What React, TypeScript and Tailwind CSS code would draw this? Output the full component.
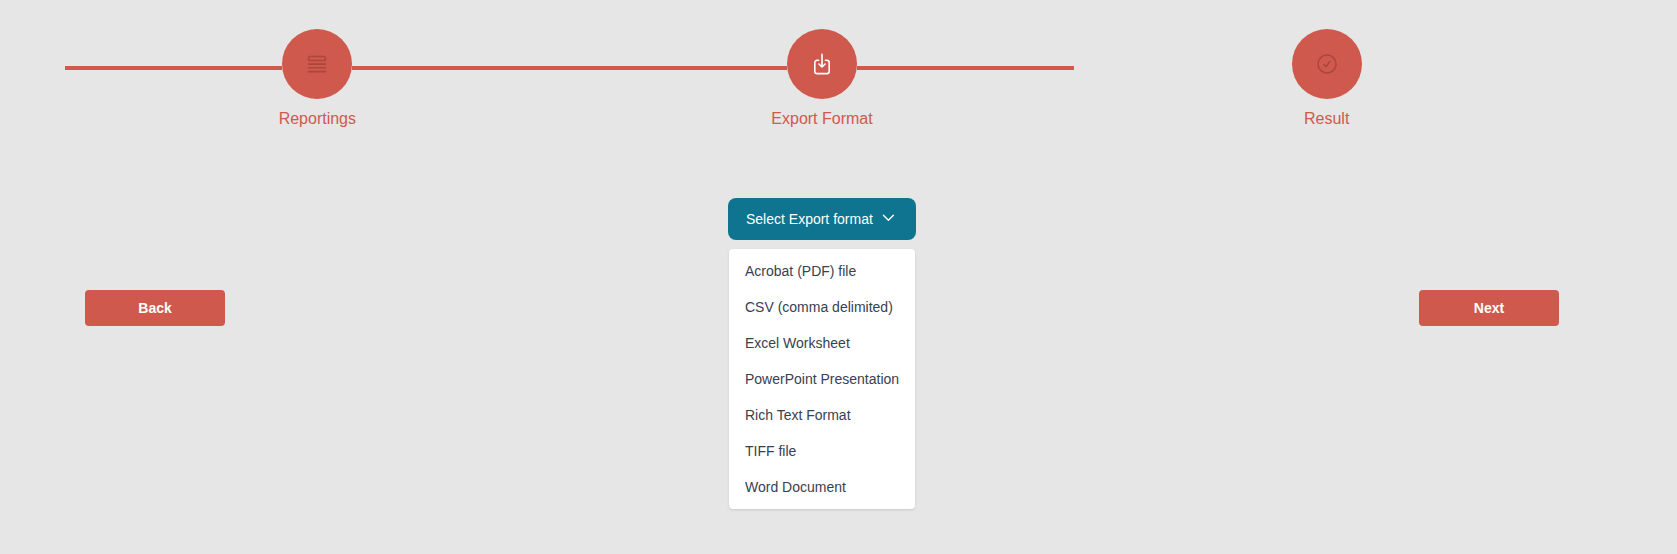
import type { ReactNode } from 'react';

function ListIcon() {
  return (
    <svg width="20" height="20" viewBox="0 0 20 20" fill="none" stroke="#ad463b" strokeWidth="1.6" strokeLinecap="round">
      <rect x="1.5" y="2.5" width="17" height="4" rx="1.8" />
      <path d="M1.5 10.1h17M1.5 13.8h17M1.5 17.6h17" />
    </svg>
  );
}

function DownloadIcon() {
  return (
    <svg width="20" height="22" viewBox="0 0 20 22" fill="none" stroke="#fff" strokeWidth="1.6" strokeLinecap="round" strokeLinejoin="round">
      <path d="M6.6 7.3H5.2A2.4 2.4 0 0 0 2.8 9.7v8.5a2.4 2.4 0 0 0 2.4 2.4h9.6a2.4 2.4 0 0 0 2.4-2.4V9.7a2.4 2.4 0 0 0-2.4-2.4h-1.4" />
      <path d="M10 1.2v12.6M6.9 11l3.1 3 3.1-3" />
    </svg>
  );
}

function CheckIcon() {
  return (
    <svg width="20" height="20" viewBox="0 0 20 20" fill="none" stroke="#ad463b" strokeWidth="1.6" strokeLinecap="round" strokeLinejoin="round">
      <circle cx="10" cy="10" r="9" />
      <path d="M7 10.6l2 2.1 3.8-5.1" />
    </svg>
  );
}

function Line({ visible }: { visible: boolean }) {
  return <span className={visible ? 'mt-2 h-1 flex-1 bg-[#cf594d]' : 'mt-2 h-1 flex-1'} />;
}

function Step({ label, icon, line = true }: { label: string; icon: ReactNode; line?: boolean }) {
  return (
    <li className="flex flex-col items-center">
      <div className="flex w-full items-center">
        <Line visible={line} />
        <span className="flex size-[70px] items-center justify-center rounded-full bg-[#cf594d]">{icon}</span>
        <Line visible={line} />
      </div>
      <span className="mt-2 text-base text-[#cf594d]">{label}</span>
    </li>
  );
}

const formats = [
  'Acrobat (PDF) file',
  'CSV (comma delimited)',
  'Excel Worksheet',
  'PowerPoint Presentation',
  'Rich Text Format',
  'TIFF file',
  'Word Document',
];

function NavButton({ children }: { children: ReactNode }) {
  return (
    <button className="mt-[92px] h-9 w-[140px] rounded bg-[#cf594d] text-sm font-bold text-white">{children}</button>
  );
}

export default function App() {
  return (
    <main className="h-[554px] bg-[#e6e6e6] pr-[98px] pl-[65px] pt-[29px] font-['Liberation_Sans',Arial,sans-serif]">
      <ol className="grid grid-cols-3">
        <Step label="Reportings" icon={<ListIcon />} />
        <Step label="Export Format" icon={<DownloadIcon />} />
        <Step label="Result" icon={<CheckIcon />} line={false} />
      </ol>
      <div className="mt-[67px] flex items-start justify-between px-5">
        <NavButton>Back</NavButton>
        <div className="flex w-[188px] flex-col">
          <button className="flex h-[42px] items-center rounded-lg bg-[#0e7490] pl-[18px] text-sm text-white">
            Select Export format
            <svg className="-mt-[3px] ml-[9px]" width="13" height="8" viewBox="0 0 13 8" fill="none" stroke="currentColor" strokeWidth="1.3" strokeLinecap="round" strokeLinejoin="round">
              <path d="M1.4 1.3l5 5 5-5" />
            </svg>
          </button>
          <ul className="mx-px mt-[9px] rounded bg-white py-1 text-sm text-[#374151] shadow">
            {formats.map((format) => (
              <li key={format} className="flex h-9 items-center px-4 whitespace-nowrap">{format}</li>
            ))}
          </ul>
        </div>
        <NavButton>Next</NavButton>
      </div>
    </main>
  );
}
